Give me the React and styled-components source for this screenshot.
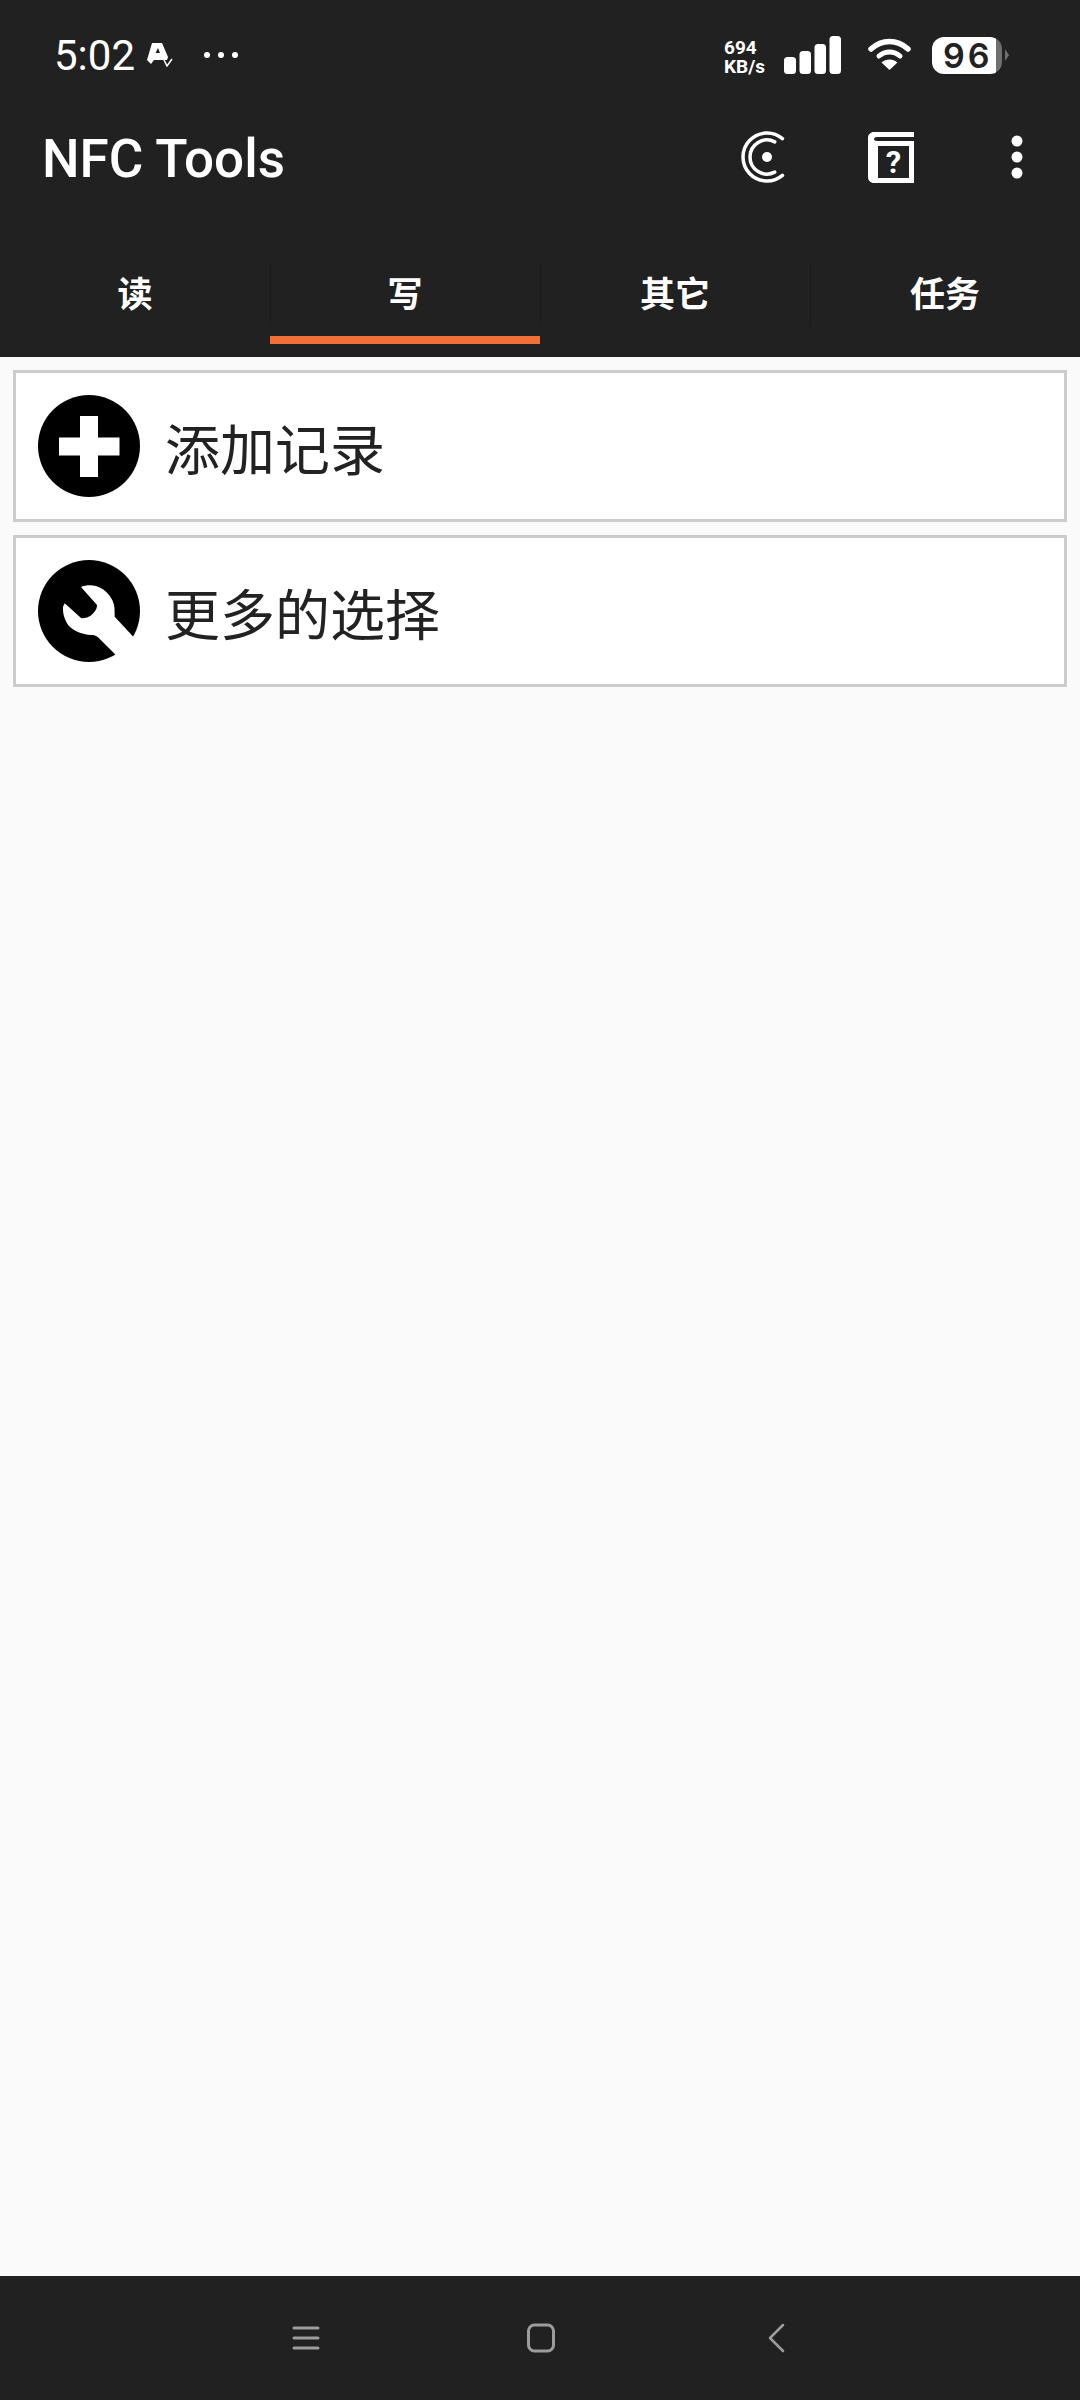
import React from 'react';
import styled, { createGlobalStyle } from 'styled-components';

const Global = createGlobalStyle`
  html, body { margin: 0; padding: 0; background: #fafafa; }
  * { box-sizing: border-box; }
`;

const Screen = styled.div`
  width: 1080px;
  height: 2400px;
  display: flex;
  flex-direction: column;
  overflow: hidden;
  background: #fafafa;
  font-family: Roboto, "Noto Sans CJK SC", sans-serif;
`;

const Header = styled.header`
  height: 357px;
  flex: none;
  background: #212121;
  color: #fff;
  display: flex;
  flex-direction: column;
`;

const StatusBar = styled.div`
  height: 110px;
  flex: none;
  display: flex;
  align-items: center;
  padding-left: 54px;
  padding-right: 78px;
`;

const Time = styled.span`
  font-size: 42px;
  line-height: 1;
  font-weight: 400;
  width: 93px;
  margin-top: 2px;
`;

const NotifyIcon = styled.svg`
  width: 26px;
  height: 24px;
  flex: none;
  margin-right: 29px;
`;

const DotsIcon = styled.svg`
  width: 38px;
  height: 8px;
  flex: none;
`;

const StatusRight = styled.div`
  margin-left: auto;
  display: flex;
  align-items: center;
`;

const Speed = styled.div`
  display: flex;
  flex-direction: column;
  font-size: 19px;
  line-height: 19px;
  font-weight: 700;
  width: 60px;
  margin-top: 3px;
`;

const StatusIcon = styled.svg`
  flex: none;
  display: block;
`;

const Battery = styled.div`
  position: relative;
  width: 70px;
  height: 37px;
  border-radius: 12px;
  background: linear-gradient(to right, #fff 0, #fff 64px, #6f6f6f 64px, #6f6f6f 100%);
  color: #222;
  font-family: Inter, sans-serif;
  font-size: 34px;
  font-weight: 600;
  line-height: 37px;
  text-align: left;
  padding-left: 11px;
  letter-spacing: 3px;
  &::after {
    content: '';
    position: absolute;
    left: 73px;
    top: 12px;
    border-left: 4px solid #6f6f6f;
    border-top: 6px solid transparent;
    border-bottom: 6px solid transparent;
  }
`;

const ActionBar = styled.div`
  height: 94px;
  flex: none;
  display: flex;
  align-items: center;
  padding-left: 42px;
`;

const Title = styled.h1`
  margin: 5px 0 0;
  font-size: 53px;
  line-height: 1;
  font-weight: 500;
  flex: 1;
`;

const ActionIcon = styled.svg`
  flex: none;
  display: block;
  margin-right: ${p => p.$mr}px;
`;

const TabBar = styled.nav`
  margin-top: 38px;
  height: 102px;
  flex: none;
  display: flex;
`;

const Tab = styled.div`
  position: relative;
  flex: 1;
  display: flex;
  align-items: center;
  justify-content: center;
  padding-top: 5px;
  font-family: "Noto Sans CJK SC", Roboto, sans-serif;
  font-size: 35px;
  line-height: 1;
  font-weight: 700;
  border-bottom: 8px solid ${p => (p.$active ? '#f26f37' : 'transparent')};
  &:not(:first-child)::before {
    content: '';
    position: absolute;
    left: 0;
    top: 20px;
    bottom: 11px;
    width: 1px;
    background: #1b1b1b;
  }
`;

const Content = styled.main`
  flex: 1;
  display: flex;
  flex-direction: column;
  gap: 13px;
  padding: 13px 13px 0;
`;

const Card = styled.div`
  height: 152px;
  display: flex;
  align-items: center;
  gap: 25px;
  padding-left: 22px;
  background: #fff;
  border: 3px solid #cccccc;
`;

const CardIcon = styled.svg`
  width: 102px;
  height: 102px;
  flex: none;
  display: block;
`;

const CardLabel = styled.span`
  font-family: "Noto Sans CJK SC", sans-serif;
  font-size: 55px;
  line-height: 1;
  font-weight: 400;
  color: #222;
`;

const NavBar = styled.footer`
  height: 124px;
  flex: none;
  background: #212121;
  display: flex;
  align-items: center;
  justify-content: center;
  gap: 207px;
  padding-left: 2px;
`;

const NavIcon = styled.svg`
  width: 28px;
  height: 30px;
  flex: none;
  display: block;
  fill: none;
  stroke: #9c9c9c;
  stroke-width: ${p => p.$stroke}px;
  stroke-linecap: round;
  stroke-linejoin: round;
`;

const arc = (r, deg) => {
  const a = (deg * Math.PI) / 180;
  const dx = r * Math.cos(a);
  const dy = r * Math.sin(a);
  return `M${27 + dx} ${27 - dy}A${r} ${r} 0 1 0 ${27 + dx} ${27 + dy}`;
};

export default function App() {
  return (
    <Screen>
      <Global />
      <Header>
        <StatusBar>
          <Time>5:02</Time>
          <NotifyIcon viewBox="0 0 26 24">
            <path fill="#fff" fillRule="evenodd" d="M5 0H15L21 14L20 17H7L4 21L0 17ZM8.500 10H13L11 5Z" />
            <path fill="none" stroke="#fff" strokeWidth="1.500" d="M17 17L20 23L25 16" />
          </NotifyIcon>
          <DotsIcon viewBox="0 0 38 8">
            <circle cx="5" cy="4" r="3" fill="#fff" />
            <circle cx="19" cy="4" r="3" fill="#fff" />
            <circle cx="33" cy="4" r="3" fill="#fff" />
          </DotsIcon>
          <StatusRight>
            <Speed>
              <span>694</span>
              <span>KB/s</span>
            </Speed>
            <StatusIcon width="57" height="38" viewBox="0 0 57 38" style={{ marginRight: 27 }}>
              <rect x="0" y="21" width="12" height="17" rx="3.500" fill="#fff" />
              <rect x="15.500" y="15" width="11.500" height="23" rx="3.500" fill="#fff" />
              <rect x="30.500" y="8" width="11.500" height="30" rx="3.500" fill="#fff" />
              <rect x="45.500" y="0" width="11.500" height="38" rx="3.500" fill="#fff" />
            </StatusIcon>
            <StatusIcon width="43" height="32" viewBox="0 0 43 32" style={{ marginRight: 21, marginTop: -2 }}>
              <path fill="none" stroke="#fff" strokeWidth="5.500" strokeLinecap="round" d="M3 11C14 1 29 1 40 11" />
              <path fill="none" stroke="#fff" strokeWidth="5" strokeLinecap="round" d="M11 18C17 12.500 26 12.500 32 18" />
              <path fill="#fff" d="M21.500 32L13.500 24.500C18 20.500 25 20.500 29.500 24.500Z" />
            </StatusIcon>
            <Battery>96</Battery>
          </StatusRight>
        </StatusBar>
        <ActionBar>
          <Title>NFC Tools</Title>
          <ActionIcon width="54" height="54" viewBox="0 0 54 54" $mr={74}>
            <path d={arc(24, 50)} fill="none" stroke="#fff" strokeWidth="3.500" strokeLinecap="round" />
            <path d={arc(17, 63)} fill="none" stroke="#fff" strokeWidth="3.500" strokeLinecap="round" />
            <circle cx="27" cy="27" r="5" fill="#fff" />
          </ActionIcon>
          <ActionIcon width="46" height="51" viewBox="0 0 46 51" $mr={97}>
            <path
              fill="#fff"
              fillRule="evenodd"
              d="M6 0H46V5H9C5 5 5 9 9 9H46V51H6C2.500 51 0 48.500 0 45V6C0 2.500 2.500 0 6 0ZM10 14V46H41V14Z"
            />
            <text x="25.500" y="41" textAnchor="middle" fontFamily="Roboto, sans-serif" fontWeight="700" fontSize="31" fill="#fff">?</text>
          </ActionIcon>
          <ActionIcon width="12" height="44" viewBox="0 0 12 44" $mr={57}>
            <circle cx="6" cy="6" r="5.500" fill="#fff" />
            <circle cx="6" cy="22" r="5.500" fill="#fff" />
            <circle cx="6" cy="38" r="5.500" fill="#fff" />
          </ActionIcon>
        </ActionBar>
        <TabBar>
          <Tab>读</Tab>
          <Tab $active>写</Tab>
          <Tab>其它</Tab>
          <Tab>任务</Tab>
        </TabBar>
      </Header>
      <Content>
        <Card>
          <CardIcon viewBox="0 0 102 102">
            <circle cx="51" cy="51" r="51" fill="#000" />
            <path fill="#fff" d="M42 21H60V42.500H81.500V60.500H60V82H42V60.500H21V42.500H42Z" />
          </CardIcon>
          <CardLabel>添加记录</CardLabel>
        </Card>
        <Card>
          <CardIcon viewBox="0 0 102 102">
            <circle cx="51" cy="51" r="51" fill="#000" />
            <path
              fill="#fff"
              d="M43 27C47 25 53 24.500 58 26C68 29 75.500 38 76.500 48L76.700 56.700L114 97L90 107L60 77.300C58 75.500 56 75 53 75C44 74.500 36 71 31 66C27 61 24.500 54 25 46.700L26.700 43.300L43.300 58.300C47 58.500 52 57 55 53.500C58 50.500 59 48 59 45Z"
            />
          </CardIcon>
          <CardLabel>更多的选择</CardLabel>
        </Card>
      </Content>
      <NavBar>
        <NavIcon viewBox="0 0 28 30" $stroke={3}>
          <path d="M2 5H26M2 15H26M2 25H26" />
        </NavIcon>
        <NavIcon viewBox="0 0 28 30" $stroke={3}>
          <rect x="1.500" y="2" width="25" height="26" rx="6" />
        </NavIcon>
        <NavIcon viewBox="0 0 28 30" $stroke={2.500}>
          <path d="M21 2L8 15L21 28" />
        </NavIcon>
      </NavBar>
    </Screen>
  );
}
